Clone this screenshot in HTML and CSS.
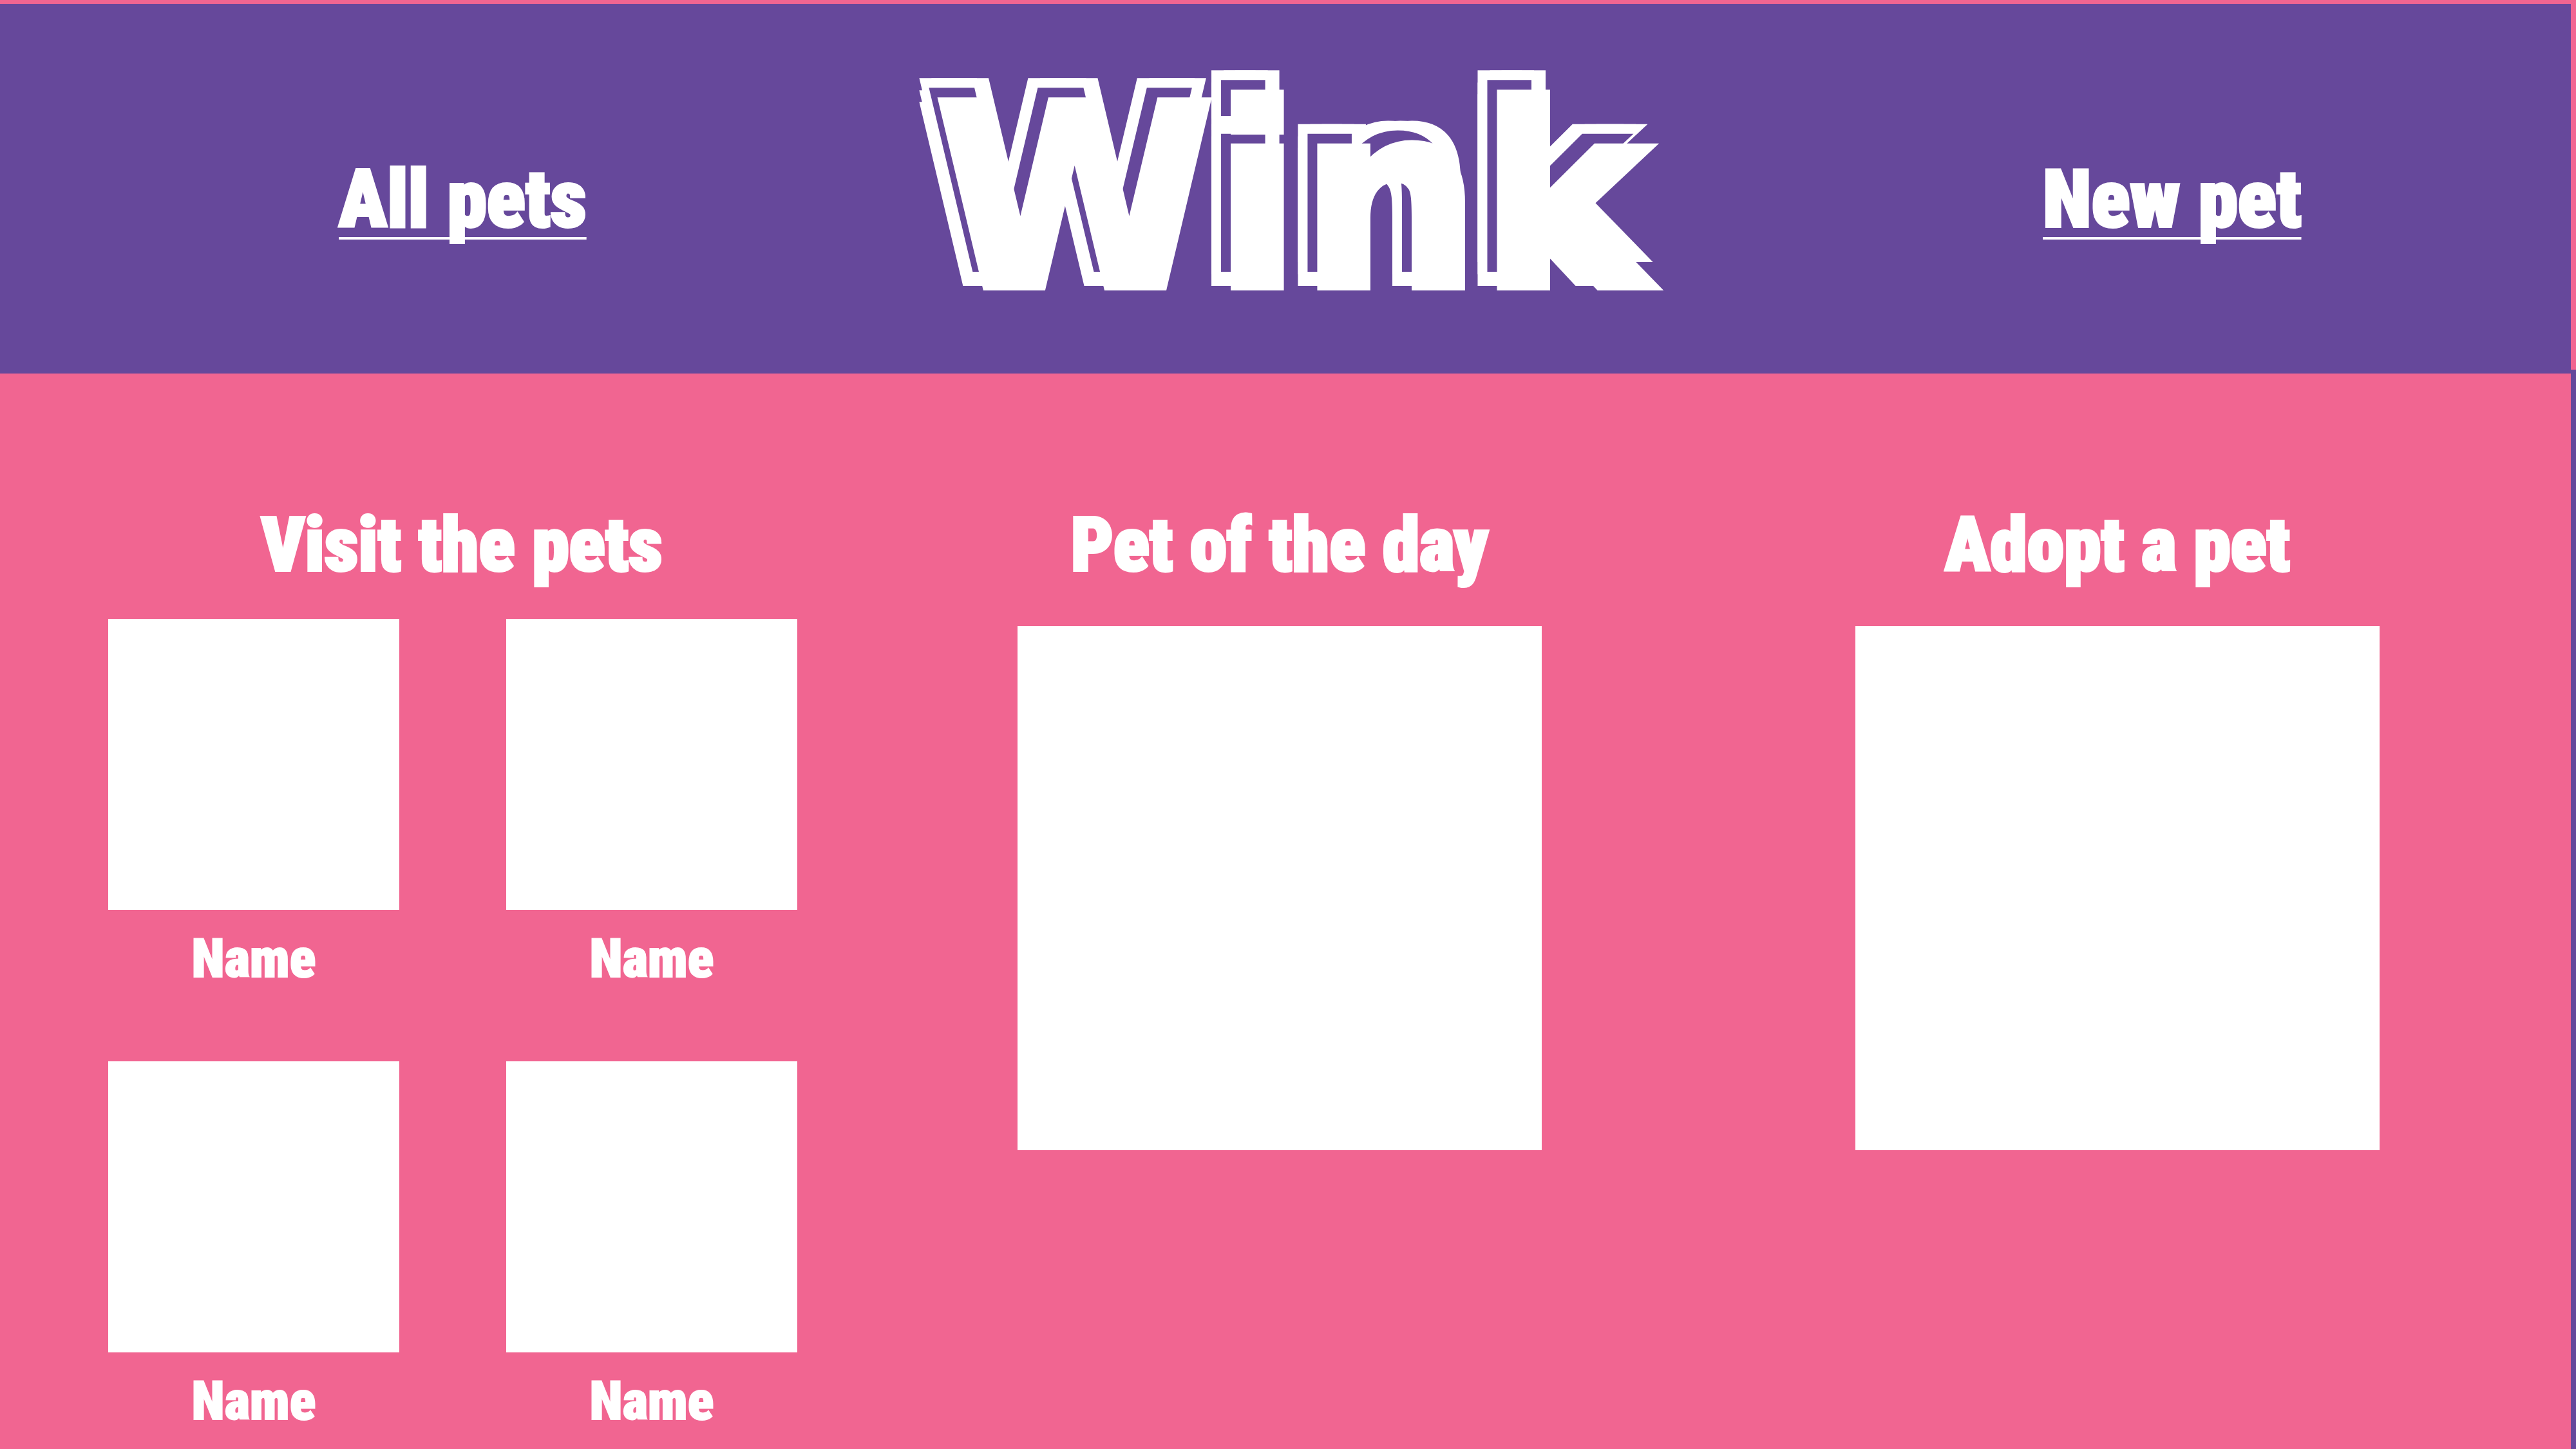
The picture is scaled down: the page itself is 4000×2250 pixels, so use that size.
FILE: index.html
```html
<!DOCTYPE html>
<html lang="en">
<head>
<meta charset="utf-8">
<meta name="viewport" content="width=device-width, initial-scale=1">
<title>Wink</title>
<link rel="stylesheet" href="styles.css">
</head>
<body>
<div class="page">
  <header class="header">
    <a class="nav-link nav-all" href="#all">All pets</a>
    <h1 class="logo">Wink</h1>
    <a class="nav-link nav-new" href="#new">New pet</a>
  </header>
  <main class="main">
    <section class="visit">
      <h2 class="title">Visit the pets</h2>
      <div class="pets">
        <figure class="pet"><div class="photo"></div><figcaption class="name">Name</figcaption></figure>
        <figure class="pet"><div class="photo"></div><figcaption class="name">Name</figcaption></figure>
        <figure class="pet"><div class="photo"></div><figcaption class="name">Name</figcaption></figure>
        <figure class="pet"><div class="photo"></div><figcaption class="name">Name</figcaption></figure>
      </div>
    </section>
    <section class="daily">
      <h2 class="title">Pet of the day</h2>
      <div class="photo"></div>
    </section>
    <section class="adopt">
      <h2 class="title">Adopt a pet</h2>
      <div class="photo"></div>
    </section>
  </main>
</div>
<div class="edge"></div>
</body>
</html>
```
FILE: styles.css
```css
* {
  box-sizing: border-box;
}

body {
  margin: 0;
  min-height: 100vh;
  display: grid;
  grid-template-columns: minmax(0, 1fr) 8px;
  background: #f16591;
  color: #fff;
  font-family: "Roboto Condensed", Roboto, sans-serif;
  font-weight: 900;
}

h1, h2, figure {
  margin: 0;
}

.page {
  padding-top: 6px;
}

.edge {
  margin-top: 568px;
  border-top: 6px solid #f16591;
  background: #66489b;
}

.header {
  height: 574px;
  display: grid;
  grid-template-columns: 528fr auto 544fr auto 615fr auto 420fr;
  align-items: start;
  background: #66489b;
}

.nav-link {
  margin-top: 230px;
  color: #fff;
  font-size: 124px;
  line-height: 148px;
  white-space: nowrap;
  text-decoration: underline;
  text-decoration-thickness: 4px;
  text-decoration-skip-ink: none;
  text-underline-offset: 16px;
  -webkit-text-stroke: 4px #fff;
}

.nav-all {
  grid-column: 2;
}

.nav-new {
  grid-column: 6;
}

.logo {
  grid-column: 4;
  margin-top: 70px;
  font-family: "DejaVu Sans", sans-serif;
  font-size: 392px;
  font-weight: 700;
  line-height: 464px;
  -webkit-text-stroke: 14px #fff;
  text-shadow:
    -22px -22px #66489b,
    -37px -37px #fff,
    -37px -18px #fff,
    -37px 0 #fff,
    -18px -37px #fff,
    0 -37px #fff;
}

.main {
  display: grid;
  grid-template-columns: 168fr minmax(0, 1070fr) 342fr minmax(0, 814fr) 487fr minmax(0, 814fr) 297fr;
  padding-top: 186px;
}

.visit {
  grid-column: 2;
}

.daily {
  grid-column: 4;
}

.adopt {
  grid-column: 6;
}

.title {
  height: 206px;
  font-size: 116px;
  font-weight: 900;
  line-height: 160px;
  text-align: center;
  white-space: nowrap;
  -webkit-text-stroke: 4px #fff;
}

.visit .title {
  height: 195px;
  padding-left: 28px;
}

.photo {
  aspect-ratio: 1;
  background: #fff;
}

.pets {
  display: grid;
  grid-template-columns: 1fr 1fr;
  column-gap: 166px;
}

.name {
  height: 235px;
  padding-top: 28px;
  font-size: 84px;
  line-height: 96px;
  text-align: center;
  -webkit-text-stroke: 2px #fff;
}

.pet:nth-child(n+3) .name {
  height: 140px;
}
```
